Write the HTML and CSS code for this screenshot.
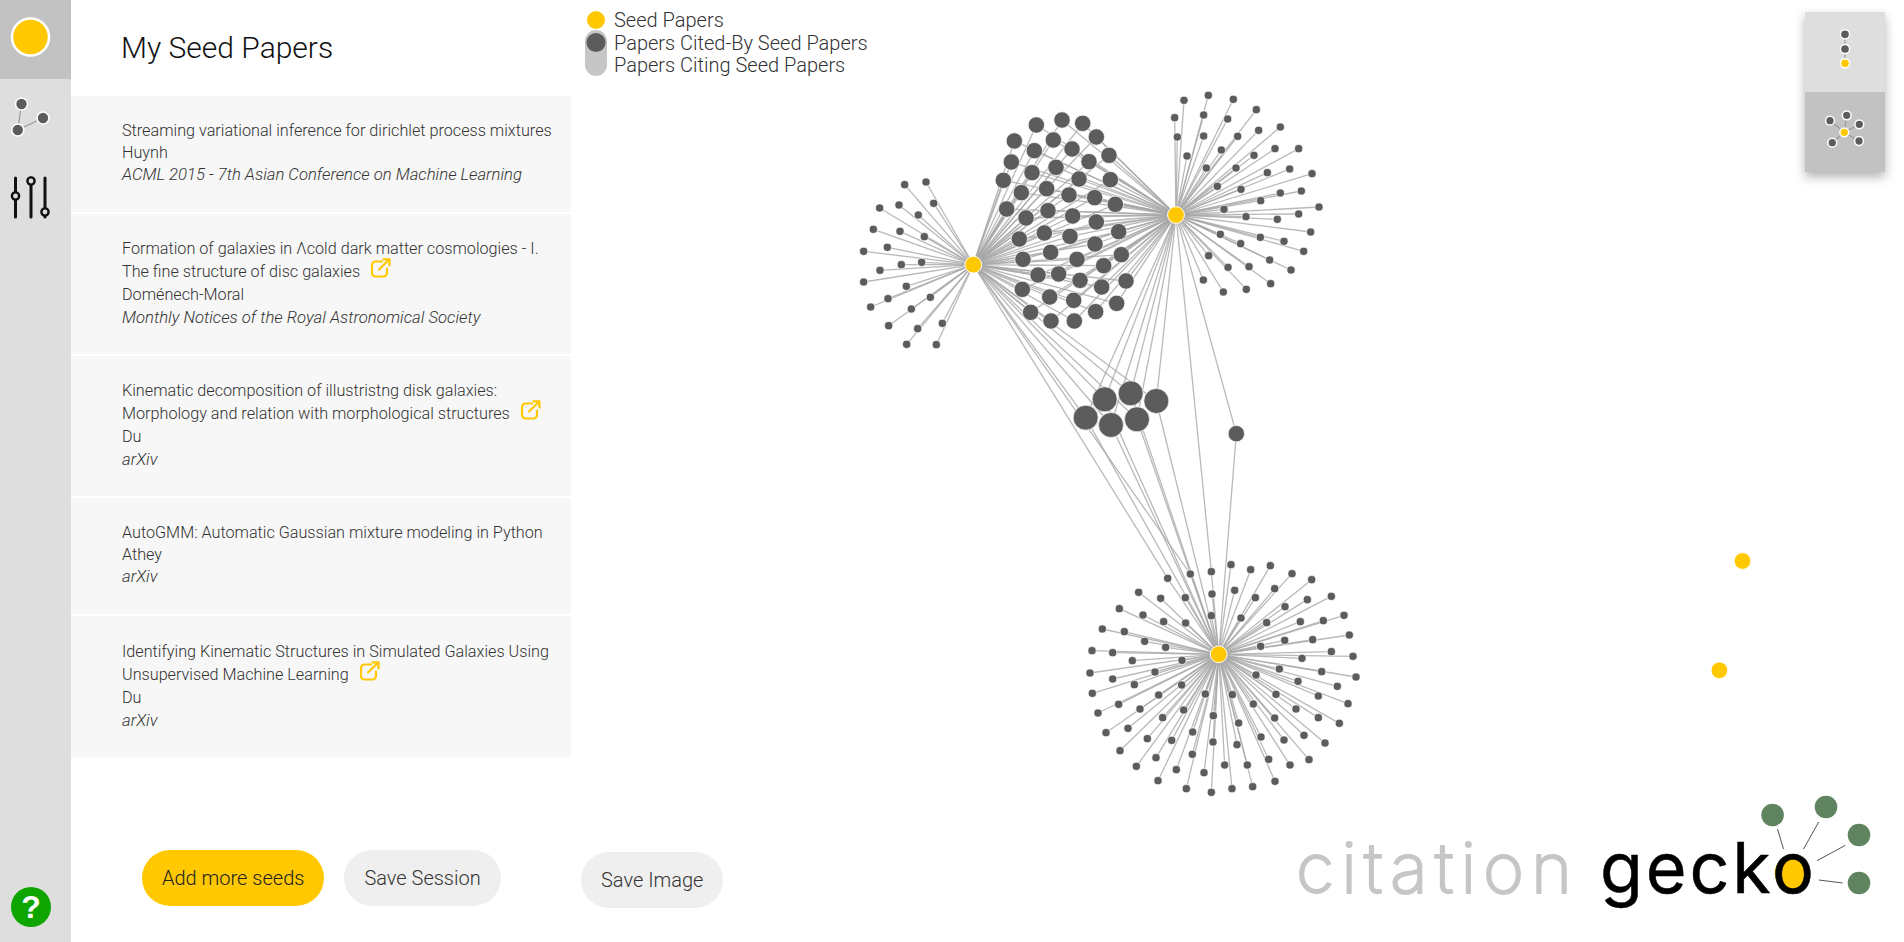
FILE: index.html
```html
<!DOCTYPE html>
<html lang="en">
<head>
<meta charset="utf-8">
<title>Citation Gecko</title>
<link rel="stylesheet" href="styles.css">
</head>
<body>
<svg class="defs" width="0" height="0" aria-hidden="true">
  <symbol id="ext" viewBox="0 0 21 20">
    <path d="M12 3.5H5.5a3.5 3.5 0 0 0-3.5 3.5v8a3.5 3.5 0 0 0 3.5 3.5h8a3.5 3.5 0 0 0 3.5-3.5v-4.5" fill="none" stroke="#ffc800" stroke-width="2.2" stroke-linecap="round"/>
    <path d="M9 11.5 19 1.8M13.5 1.4h6v6" fill="none" stroke="#ffc800" stroke-width="2.2" stroke-linecap="round" stroke-linejoin="round"/>
  </symbol>
</svg>

<nav class="sidebar">
  <div class="tabs">
    <div class="tab tab-active">
      <svg class="tab-icon" viewBox="0 0 71 79"><circle cx="30.5" cy="37" r="18.5" fill="#ffc800" stroke="#fff" stroke-width="2.5"/></svg>
    </div>
    <div class="tab">
      <svg class="tab-icon" viewBox="0 0 71 79">
        <path d="M21.5 25 17.8 51 43 39" fill="none" stroke="#999" stroke-width="1.2"/>
        <circle cx="21.5" cy="25" r="6" fill="#5c5c5c" stroke="#fff" stroke-width="1.6"/>
        <circle cx="43" cy="39" r="6" fill="#5c5c5c" stroke="#fff" stroke-width="1.6"/>
        <circle cx="17.8" cy="51" r="6" fill="#5c5c5c" stroke="#fff" stroke-width="1.6"/>
      </svg>
    </div>
    <div class="tab">
      <svg class="tab-icon" viewBox="0 0 71 79">
        <path d="M15.5 20V59M31 20V59M45 20V59" stroke="#111" stroke-width="3" stroke-linecap="round"/>
        <circle cx="15.5" cy="38" r="3.6" fill="#dedede" stroke="#111" stroke-width="2.4"/>
        <circle cx="31" cy="23" r="3.6" fill="#dedede" stroke="#111" stroke-width="2.4"/>
        <circle cx="45" cy="54" r="3.6" fill="#dedede" stroke="#111" stroke-width="2.4"/>
      </svg>
    </div>
  </div>
  <div class="help">?</div>
</nav>

<section class="panel">
  <h1 class="panel-title">My Seed Papers</h1>
  <ul class="papers">
    <li class="paper">
      <div>Streaming variational inference for dirichlet process mixtures</div>
      <div>Huynh</div>
      <div class="venue">ACML 2015 - 7th Asian Conference on Machine Learning</div>
    </li>
    <li class="paper paper-long">
      <div>Formation of galaxies in Λcold dark matter cosmologies - I. The fine structure of disc galaxies<svg class="ext-icon"><use href="#ext"/></svg></div>
      <div>Doménech-Moral</div>
      <div class="venue">Monthly Notices of the Royal Astronomical Society</div>
    </li>
    <li class="paper paper-long">
      <div>Kinematic decomposition of illustristng disk galaxies: Morphology and relation with morphological structures<svg class="ext-icon"><use href="#ext"/></svg></div>
      <div>Du</div>
      <div class="venue">arXiv</div>
    </li>
    <li class="paper">
      <div>AutoGMM: Automatic Gaussian mixture modeling in Python</div>
      <div>Athey</div>
      <div class="venue">arXiv</div>
    </li>
    <li class="paper paper-long">
      <div>Identifying Kinematic Structures in Simulated Galaxies Using Unsupervised Machine Learning<svg class="ext-icon"><use href="#ext"/></svg></div>
      <div>Du</div>
      <div class="venue">arXiv</div>
    </li>
  </ul>
  <div class="panel-actions">
    <button class="btn btn-primary">Add more seeds</button>
    <button class="btn">Save Session</button>
  </div>
</section>

<main class="canvas">
  <svg id="graph" class="graph" viewBox="571 0 1333 942"></svg>

  <div class="legend">
    <svg class="legend-keys" viewBox="0 0 24 70">
      <rect x="1" y="21" width="22" height="46" rx="11" fill="#c6c6c6"/>
      <circle cx="12" cy="33.5" r="9.6" fill="#5c5c5c"/>
      <circle cx="12" cy="11" r="9" fill="#ffc800"/>
    </svg>
    <div class="legend-labels">
      <div>Seed Papers</div>
      <div>Papers Cited-By Seed Papers</div>
      <div>Papers Citing Seed Papers</div>
    </div>
  </div>

  <div class="view-toggle">
    <div class="view-option">
      <svg class="view-icon" viewBox="0 0 80 80">
        <path d="M40 22V51" stroke="#aaa" stroke-width="1.5"/>
        <circle cx="40" cy="22.3" r="4.6" fill="#5c5c5c" stroke="#fff" stroke-width="1.5"/>
        <circle cx="40" cy="37" r="4.6" fill="#5c5c5c" stroke="#fff" stroke-width="1.5"/>
        <circle cx="40" cy="51.3" r="4.6" fill="#ffc800" stroke="#fff" stroke-width="1.5"/>
      </svg>
    </div>
    <div class="view-option view-option-active">
      <svg class="view-icon" viewBox="0 0 80 80">
        <path d="M41.7 23.3 39.3 40.3M54.3 32.3 39.3 40.3M54 49 39.3 40.3M27.3 50.7 39.3 40.3M25 28.7 39.3 40.3" stroke="#999" stroke-width="1.2"/>
        <circle cx="41.7" cy="23.3" r="4.4" fill="#5c5c5c" stroke="#fff" stroke-width="1.5"/>
        <circle cx="54.3" cy="32.3" r="4.4" fill="#5c5c5c" stroke="#fff" stroke-width="1.5"/>
        <circle cx="54" cy="49" r="4.4" fill="#5c5c5c" stroke="#fff" stroke-width="1.5"/>
        <circle cx="27.3" cy="50.7" r="4.4" fill="#5c5c5c" stroke="#fff" stroke-width="1.5"/>
        <circle cx="25" cy="28.7" r="4.4" fill="#5c5c5c" stroke="#fff" stroke-width="1.5"/>
        <circle cx="39.3" cy="40.3" r="4.4" fill="#ffc800" stroke="#fff" stroke-width="1.5"/>
      </svg>
    </div>
  </div>

  <button class="btn btn-image">Save Image</button>

  <svg class="logo" viewBox="1290 795 590 125">
    <text class="logo-citation" x="1296" y="893" textLength="276">citation</text>
    <circle cx="1791.6" cy="873" r="17" fill="#ffc800"/>
    <text class="logo-gecko" x="1600" y="893" textLength="214">gecko</text>
    <path d="M1777.5 829 1783.5 849M1818.7 822 1803.4 849.3M1845.4 845.3 1817 860.7M1819 880 1842.6 883" stroke="#555" stroke-width="1"/>
    <circle cx="1772.6" cy="815" r="11.3" fill="#5f845f"/>
    <circle cx="1826" cy="807" r="11.3" fill="#5f845f"/>
    <circle cx="1859" cy="835" r="11.3" fill="#5f845f"/>
    <circle cx="1859" cy="883" r="11.3" fill="#5f845f"/>
  </svg>
</main>

<script src="graph.js"></script>
</body>
</html>
```
FILE: styles.css
```css
* { box-sizing: border-box; }

html, body {
  margin: 0;
  height: 100%;
  overflow: hidden;
}

body {
  display: flex;
  background: #fff;
  color: #333;
  font-family: Roboto, "Liberation Sans", sans-serif;
  font-weight: 300;
}

.defs { position: absolute; }

.sidebar {
  width: 71px;
  flex: none;
  display: flex;
  flex-direction: column;
  justify-content: space-between;
  background: #dedede;
}

.tab { height: 79px; }
.tab-active { background: #c2c2c2; }
.tab-icon { display: block; width: 71px; height: 79px; }

.help {
  width: 40px;
  height: 40px;
  margin: 0 0 15px 11px;
  border-radius: 50%;
  background: #0ea500;
  color: #fff;
  font: 700 32px/40px "Liberation Sans", sans-serif;
  text-align: center;
}

.panel {
  width: 500px;
  flex: none;
  display: flex;
  flex-direction: column;
}

.panel-title {
  margin: 0;
  height: 96px;
  padding-left: 50px;
  color: #111;
  font-size: 30px;
  font-weight: 300;
  line-height: 95px;
}

.papers {
  list-style: none;
  margin: 0;
  padding: 0;
  display: flex;
  flex-direction: column;
  gap: 2px;
}

.paper {
  padding: 24px 14px 26px 51px;
  background: #f7f7f7;
  font-size: 16.2px;
  line-height: 22px;
}

.paper-long {
  padding-top: 23px;
  padding-bottom: 25px;
  line-height: 23px;
}

.paper:last-child {
  padding-top: 24px;
}

.venue {
  font-size: 16.7px;
  font-style: italic;
}

.ext-icon {
  width: 21px;
  height: 20px;
  margin: -4px 0 -4px 10px;
  vertical-align: 3px;
}

.panel-actions {
  margin-top: auto;
  padding: 0 0 36px 71px;
  display: flex;
  gap: 20px;
}

.btn {
  height: 56px;
  padding: 0 20px;
  border: 0;
  border-radius: 28px;
  background: #efefef;
  color: #333;
  font: 300 20px Roboto, "Liberation Sans", sans-serif;
}

.btn-primary {
  background: #ffc800;
  color: #222;
}

.canvas {
  position: relative;
  flex: 1;
  min-width: 0;
}

.graph {
  display: block;
  width: 100%;
  height: 100%;
}

.edge {
  stroke: #a8a8a8;
  stroke-width: 1.3;
  stroke-opacity: .8;
}

.node {
  fill: #5c5c5c;
  stroke: #fff;
  stroke-width: .7;
}

.seed {
  fill: #ffc800;
  stroke: #fff;
  stroke-width: 1;
}

.legend {
  position: absolute;
  left: 13px;
  top: 9px;
  display: flex;
  gap: 6px;
}

.legend-keys {
  display: block;
  width: 24px;
  height: 70px;
}

.legend-labels {
  font-size: 20px;
  line-height: 22.5px;
  color: #333;
}

.view-toggle {
  position: absolute;
  top: 12px;
  right: 19px;
  width: 80px;
  box-shadow: 0 5px 10px rgba(0, 0, 0, .3);
}

.view-option {
  height: 80px;
  background: #dedede;
}

.view-option-active { background: #c2c2c2; }
.view-icon { display: block; width: 80px; height: 80px; }

.btn-image {
  position: absolute;
  left: 10px;
  bottom: 34px;
}

.logo {
  position: absolute;
  right: 24px;
  bottom: 22px;
  width: 590px;
  height: 125px;
}

.logo text {
  font-family: Inter, sans-serif;
  font-size: 70px;
  font-variant-ligatures: none;
  stroke-linejoin: round;
  stroke-linecap: round;
}

.logo-citation {
  fill: #c6c6c6;
  stroke: #c6c6c6;
  stroke-width: 2;
  font-weight: 200;
}

.logo-gecko {
  fill: #000;
  stroke: #000;
  stroke-width: .5;
  font-weight: 400;
}
```
FILE: graph.js
```js
// Node positions are stored as 3x crop coordinates around each cluster.
const seeds = {
  a: [973.3, 264.7],
  b: [1176, 215],
  c: [1218.7, 654.3],
  d: [1742.5, 561],
  e: [1719.4, 670.3]
};

const scale = (list, ox, oy) => list.map(([x, y]) => [ox + x / 3, oy + y / 3]);

const aOnly = scale([[258,66],[194,74],[281,130],[119,144],[177,135],[235,165],[100,208],[180,214],[253,230],[71,274],[142,262],[245,307],[184,314],[120,331],[71,366],[199,379],[144,416],[92,441],[271,412],[214,447],[146,497],[233,506],[307,490],[200,553],[289,554]], 840, 160);

const bOnly = scale([[42,61],[115,46],[190,58],[14,113],[101,105],[173,117],[259,89],[22,171],[101,168],[203,169],[266,151],[331,141],[51,228],[154,210],[252,226],[315,206],[386,206],[109,264],[198,264],[292,278],[359,267],[426,281],[142,319],[213,328],[331,339],[394,333],[272,362],[162,388],[228,410],[322,418],[386,402],[447,381],[151,463],[271,472],[342,484],[422,456],[212,491],[401,514],[299,540],[363,570],[116,527],[174,562],[237,560],[302,611],[100,600],[160,636],[229,628]], 1170, 80);

const cOnly = scale([[513,74],[572,89],[631,77],[696,101],[755,119],[814,169],[852,226],[868,285],[879,349],[888,411],[864,491],[832,439],[838,550],[795,609],[747,659],[645,724],[578,740],[516,746],[454,757],[379,746],[294,722],[229,679],[180,632],[138,578],[114,519],[97,460],[90,399],[96,332],[127,267],[178,206],[236,157],[456,162],[524,151],[644,146],[742,179],[790,242],[758,299],[814,335],[785,395],[775,468],[775,533],[732,586],[690,675],[626,658],[562,675],[494,675],[432,698],[349,689],[288,653],[204,565],[176,493],[158,417],[158,338],[193,275],[249,225],[302,175],[376,173],[454,227],[586,173],[675,200],[721,245],[674,301],[726,355],[658,387],[714,424],[708,507],[672,600],[603,591],[531,614],[459,606],[397,643],[335,601],[262,596],[240,507],[223,434],[217,362],[254,304],[311,245],[377,249],[543,234],[620,248],[602,319],[588,405],[648,463],[644,534],[580,492],[536,549],[460,527],[398,576],[371,510],[308,533],[296,465],[285,396],[317,322],[366,361],[365,435],[436,462],[517,464]], 1060, 540);

const acShared = scale([[323,115],[391,102]], 1060, 540);
const bcShared = scale([[454,95]], 1060, 540);

const abShared = scale([[589,135],[666,120],[728,130],[769,171],[523,183],[640,180],[583,212],[696,207],[807,226],[514,246],[747,245],[648,262],[576,278],[490,301],[717,297],[811,299],[620,326],[544,338],[687,345],[764,353],[826,373],[500,387],[624,392],[558,414],[698,408],[769,426],[836,455],[613,459],[538,477],[690,469],[765,492],[632,517],[549,538],[711,538],[844,524],[791,557],[594,585],[656,582],[720,601],[858,603],[547,628],[785,621],[629,651],[701,661],[830,670],[572,697],[767,695],[633,723],[703,723]], 840, 80);

const abcShared = scale([[137,143],[194,88],[272,70],[349,93],[213,165],[291,148]], 1040, 370);
const bridge = scale([[589,191]], 1040, 370);

const groups = [
  { nodes: aOnly, to: ["a"], r: 4.1 },
  { nodes: bOnly, to: ["b"], r: 4.1 },
  { nodes: cOnly, to: ["c"], r: 4.1 },
  { nodes: acShared, to: ["a", "c"], r: 4.1 },
  { nodes: bcShared, to: ["b", "c"], r: 4.1 },
  { nodes: abShared, to: ["a", "b"], r: 8.2 },
  { nodes: abcShared, to: ["a", "b", "c"], r: 12.5 },
  { nodes: bridge, to: ["b", "c"], r: 8.2 }
];

const svg = document.getElementById("graph");
const NS = "http://www.w3.org/2000/svg";

function add(tag, attrs) {
  const el = document.createElementNS(NS, tag);
  for (const key in attrs) el.setAttribute(key, attrs[key]);
  svg.appendChild(el);
}

for (const group of groups) {
  for (const [x, y] of group.nodes) {
    for (const seed of group.to) {
      const [sx, sy] = seeds[seed];
      add("line", { class: "edge", x1: sx, y1: sy, x2: x, y2: y });
    }
  }
}

for (const group of groups) {
  for (const [x, y] of group.nodes) {
    add("circle", { class: "node", cx: x, cy: y, r: group.r });
  }
}

for (const key in seeds) {
  add("circle", { class: "seed", cx: seeds[key][0], cy: seeds[key][1], r: 8.4 });
}
```
